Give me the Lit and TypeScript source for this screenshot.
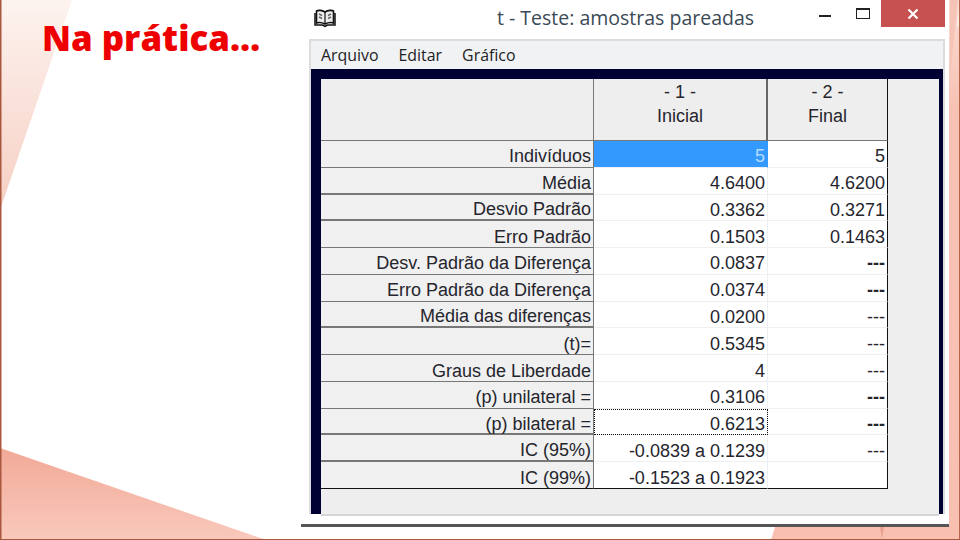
import { LitElement, html, css, svg } from "lit";
import { customElement } from "lit/decorators.js";

type Row = { label: string; a: string; b: string; thick?: boolean; boldDash?: boolean; sel?: boolean; focus?: boolean };

const ROWS: Row[] = [
  { label: "Indivíduos", a: "5", b: "5", sel: true },
  { label: "Média", a: "4.6400", b: "4.6200", thick: true },
  { label: "Desvio Padrão", a: "0.3362", b: "0.3271", thick: true },
  { label: "Erro Padrão", a: "0.1503", b: "0.1463" },
  { label: "Desv. Padrão da Diferença", a: "0.0837", b: "---", boldDash: true },
  { label: "Erro Padrão da Diferença", a: "0.0374", b: "---", boldDash: true },
  { label: "Média das diferenças", a: "0.0200", b: "---", thick: true },
  { label: "(t)=", a: "0.5345", b: "---" },
  { label: "Graus de Liberdade", a: "4", b: "---" },
  { label: "(p) unilateral =", a: "0.3106", b: "---", boldDash: true },
  { label: "(p) bilateral =", a: "0.6213", b: "---", boldDash: true, focus: true, thick: true },
  { label: "IC (95%)", a: "-0.0839 a 0.1239", b: "---", thick: true },
  { label: "IC (99%)", a: "-0.1523 a 0.1923", b: "" },
];

@customElement("app-root")
export class AppRoot extends LitElement {
  static styles = css`
    :host {
      display: block;
      position: relative;
      width: 960px;
      height: 540px;
      overflow: hidden;
      background: #fff;
      font-family: "Liberation Sans", Arial, sans-serif;
    }
    .backdrop { position: absolute; inset: 0; width: 960px; height: 540px; }
    .slide { position: relative; display: flex; height: 540px; }
    .left { width: 301px; flex: none; padding: 15px 0 0 42px; box-sizing: border-box; }
    h1 {
      margin: 0;
      font-family: "Open Sans", sans-serif;
      font-weight: 800;
      font-size: 34.8px;
      line-height: 46px;
      color: #ee0000;
      white-space: nowrap;
    }
    .win {
      width: 648px;
      height: 527px;
      flex: none;
      background: #fff;
      display: flex;
      flex-direction: column;
      box-sizing: border-box;
      border-bottom: 3px solid #555;
    }
    .titlebar { height: 39px; flex: none; display: flex; align-items: flex-start; }
    .book { width: 22px; height: 19px; margin: 9px 0 0 13px; flex: none; }
    .wtitle {
      margin: 4px 0 0 161px;
      width: 322px;
      flex: none;
      font-family: "Open Sans", sans-serif;
      font-size: 19.5px;
      line-height: 27px;
      color: #3b4a56;
      white-space: nowrap;
    }
    .min { width: 12px; height: 2px; background: #222; margin: 15px 0 0 0; flex: none; }
    .max {
      width: 12px; height: 8px;
      border: 1px solid #222; border-top-width: 2px;
      margin: 8px 0 0 25px; flex: none;
    }
    .close {
      width: 64px; height: 27px; margin-left: 11px; flex: none;
      background: #c75050;
      display: flex; align-items: center; justify-content: center;
    }
    .close svg { width: 12px; height: 12px; }
    .body {
      margin: 0 4px 0 8px;
      flex: none;
      border: 2px solid #dcdcdc;
      border-bottom: none;
      background: #f1f2f4;
    }
    .menu {
      height: 28px;
      display: flex;
      gap: 20px;
      padding-left: 10px;
      align-items: center;
      font-family: "Open Sans", sans-serif;
      font-size: 15.9px;
      color: #222;
    }
    .navy { background: #000033; padding: 10px 4px 0 10px; height: 435px; }
    .panel { background: #eeeeee; height: 435px; border-bottom: 2px solid #d6d6d6; box-sizing: content-box; }
    .table {
      display: grid;
      grid-template-columns: 273px 174px 120px;
      grid-template-rows: 62px repeat(13, 26.77px);
      width: 567px;
      font-size: 18px;
      color: #25252d;
      box-sizing: border-box;
    }
    .head {
      background: #eeeeee;
      border-right: 1px solid #777;
      border-bottom: 1px solid #777;
      box-sizing: border-box;
    }
    .hcol {
      display: flex;
      flex-direction: column;
      align-items: center;
      padding-top: 1px;
      line-height: 24px;
      border-right-width: 2px;
      border-right-color: #666;
    }
    .hcol.last { border-right: 1px solid #111; }
    .cell {
      display: flex;
      align-items: center;
      justify-content: flex-end;
      padding: 5px 2px 0 0;
      box-sizing: border-box;
      white-space: nowrap;
      line-height: 1;
    }
    .lab { background: #f0f0f0; border-right: 1px solid #777; border-bottom: 1px solid #777; }
    .lab.thick { border-bottom-width: 2px; }
    .val { background: #fff; border-right: 1px solid #e9eff3; border-bottom: 1px solid #eef0f2; }
    .val.b { border-right: 1px solid #111; }
    .sel { background: #3399ff; color: #b5dcff; border-right-color: #3399ff; }
    .focus { outline: 1px dotted #111; outline-offset: -1px; }
    .dash-b { font-weight: 700; }
    .end { border-bottom-color: #111; }
  `;

  private backdrop() {
    return svg`
      <defs>
        <linearGradient id="tl" x1="0" y1="0" x2="0" y2="1">
          <stop offset="0" stop-color="#fdf3ef" />
          <stop offset="1" stop-color="#f6cfc3" />
        </linearGradient>
        <linearGradient id="bl" x1="0" y1="0" x2="0" y2="1">
          <stop offset="0" stop-color="#f2a997" />
          <stop offset="1" stop-color="#f9c9bc" />
        </linearGradient>
        <linearGradient id="rs" x1="0" y1="0" x2="0" y2="1">
          <stop offset="0" stop-color="#fbdcd3" />
          <stop offset="0.2" stop-color="#f7c2b4" />
          <stop offset="1" stop-color="#f9c0b2" />
        </linearGradient>
      </defs>
      <polygon points="0,0 72,0 0,210" fill="url(#tl)" />
      <polygon points="0,448 266,540 0,540" fill="url(#bl)" />
      <polygon points="775,527 960,527 960,540 771,540" fill="#f9c0b2" />
      <polygon points="880,527 884,527 882,539" fill="#e99f8d" />
      <rect x="949" y="0" width="11" height="540" fill="url(#rs)" />
      <polygon points="950,75 950,0 958,0" fill="#f6c4b7" />
      <polygon points="957,25 960,0 960,30" fill="#fdeee9" />
      <rect x="0" y="0" width="1.5" height="540" fill="#a9583f" />
      <rect x="959" y="0" width="1" height="540" fill="#b9654b" />
      <rect x="0" y="539" width="960" height="1" fill="#a9583f" />
    `;
  }

  render() {
    return html`
      <svg class="backdrop" viewBox="0 0 960 540">${this.backdrop()}</svg>
      <div class="slide">
        <div class="left"><h1>Na prática…</h1></div>
        <div class="win">
          <div class="titlebar">
            <svg class="book" viewBox="0 0 22 19">
              <path d="M11 3 C8 1 4 1 2.500 2 V14 C5 13 8 13.500 11 15 C14 13.500 17 13 19.500 14 V2 C18 1 14 1 11 3 Z" fill="#eee" stroke="#111" stroke-width="1.600" />
              <path d="M1 4 V16 H8.500 L11 17.500 L13.500 16 H21 V4" fill="none" stroke="#111" stroke-width="1.500" />
              <path d="M11 3 V15" stroke="#111" stroke-width="1.200" />
              <path d="M5 5 L8 6.500 M5 8 L8 9.500 M14 6.500 L17 5 M14 9.500 L17 8" stroke="#666" stroke-width="1.500" />
            </svg>
            <div class="wtitle">t - Teste: amostras pareadas</div>
            <div class="min"></div>
            <div class="max"></div>
            <div class="close">
              <svg viewBox="0 0 12 12"><path d="M1.500 1.500 L10.500 10.500 M10.500 1.500 L1.500 10.500" stroke="#fff" stroke-width="2.200" /></svg>
            </div>
          </div>
          <div class="body">
            <div class="menu"><span>Arquivo</span><span>Editar</span><span>Gráfico</span></div>
            <div class="navy">
              <div class="panel">
                <div class="table">
                  <div class="head"></div>
                  <div class="head hcol"><span>- 1 -</span><span>Inicial</span></div>
                  <div class="head hcol last"><span>- 2 -</span><span>Final</span></div>
                  ${ROWS.map((r, i) => {
                    const end = i === ROWS.length - 1 ? "end" : "";
                    return html`
                      <div class="cell lab ${r.thick ? "thick" : ""} ${end}">${r.label}</div>
                      <div class="cell val ${r.sel ? "sel" : ""} ${r.focus ? "focus" : ""} ${end}">${r.a}</div>
                      <div class="cell val b ${r.boldDash ? "dash-b" : ""} ${end}">${r.b}</div>
                    `;
                  })}
                </div>
              </div>
            </div>
          </div>
        </div>
      </div>
    `;
  }
}
